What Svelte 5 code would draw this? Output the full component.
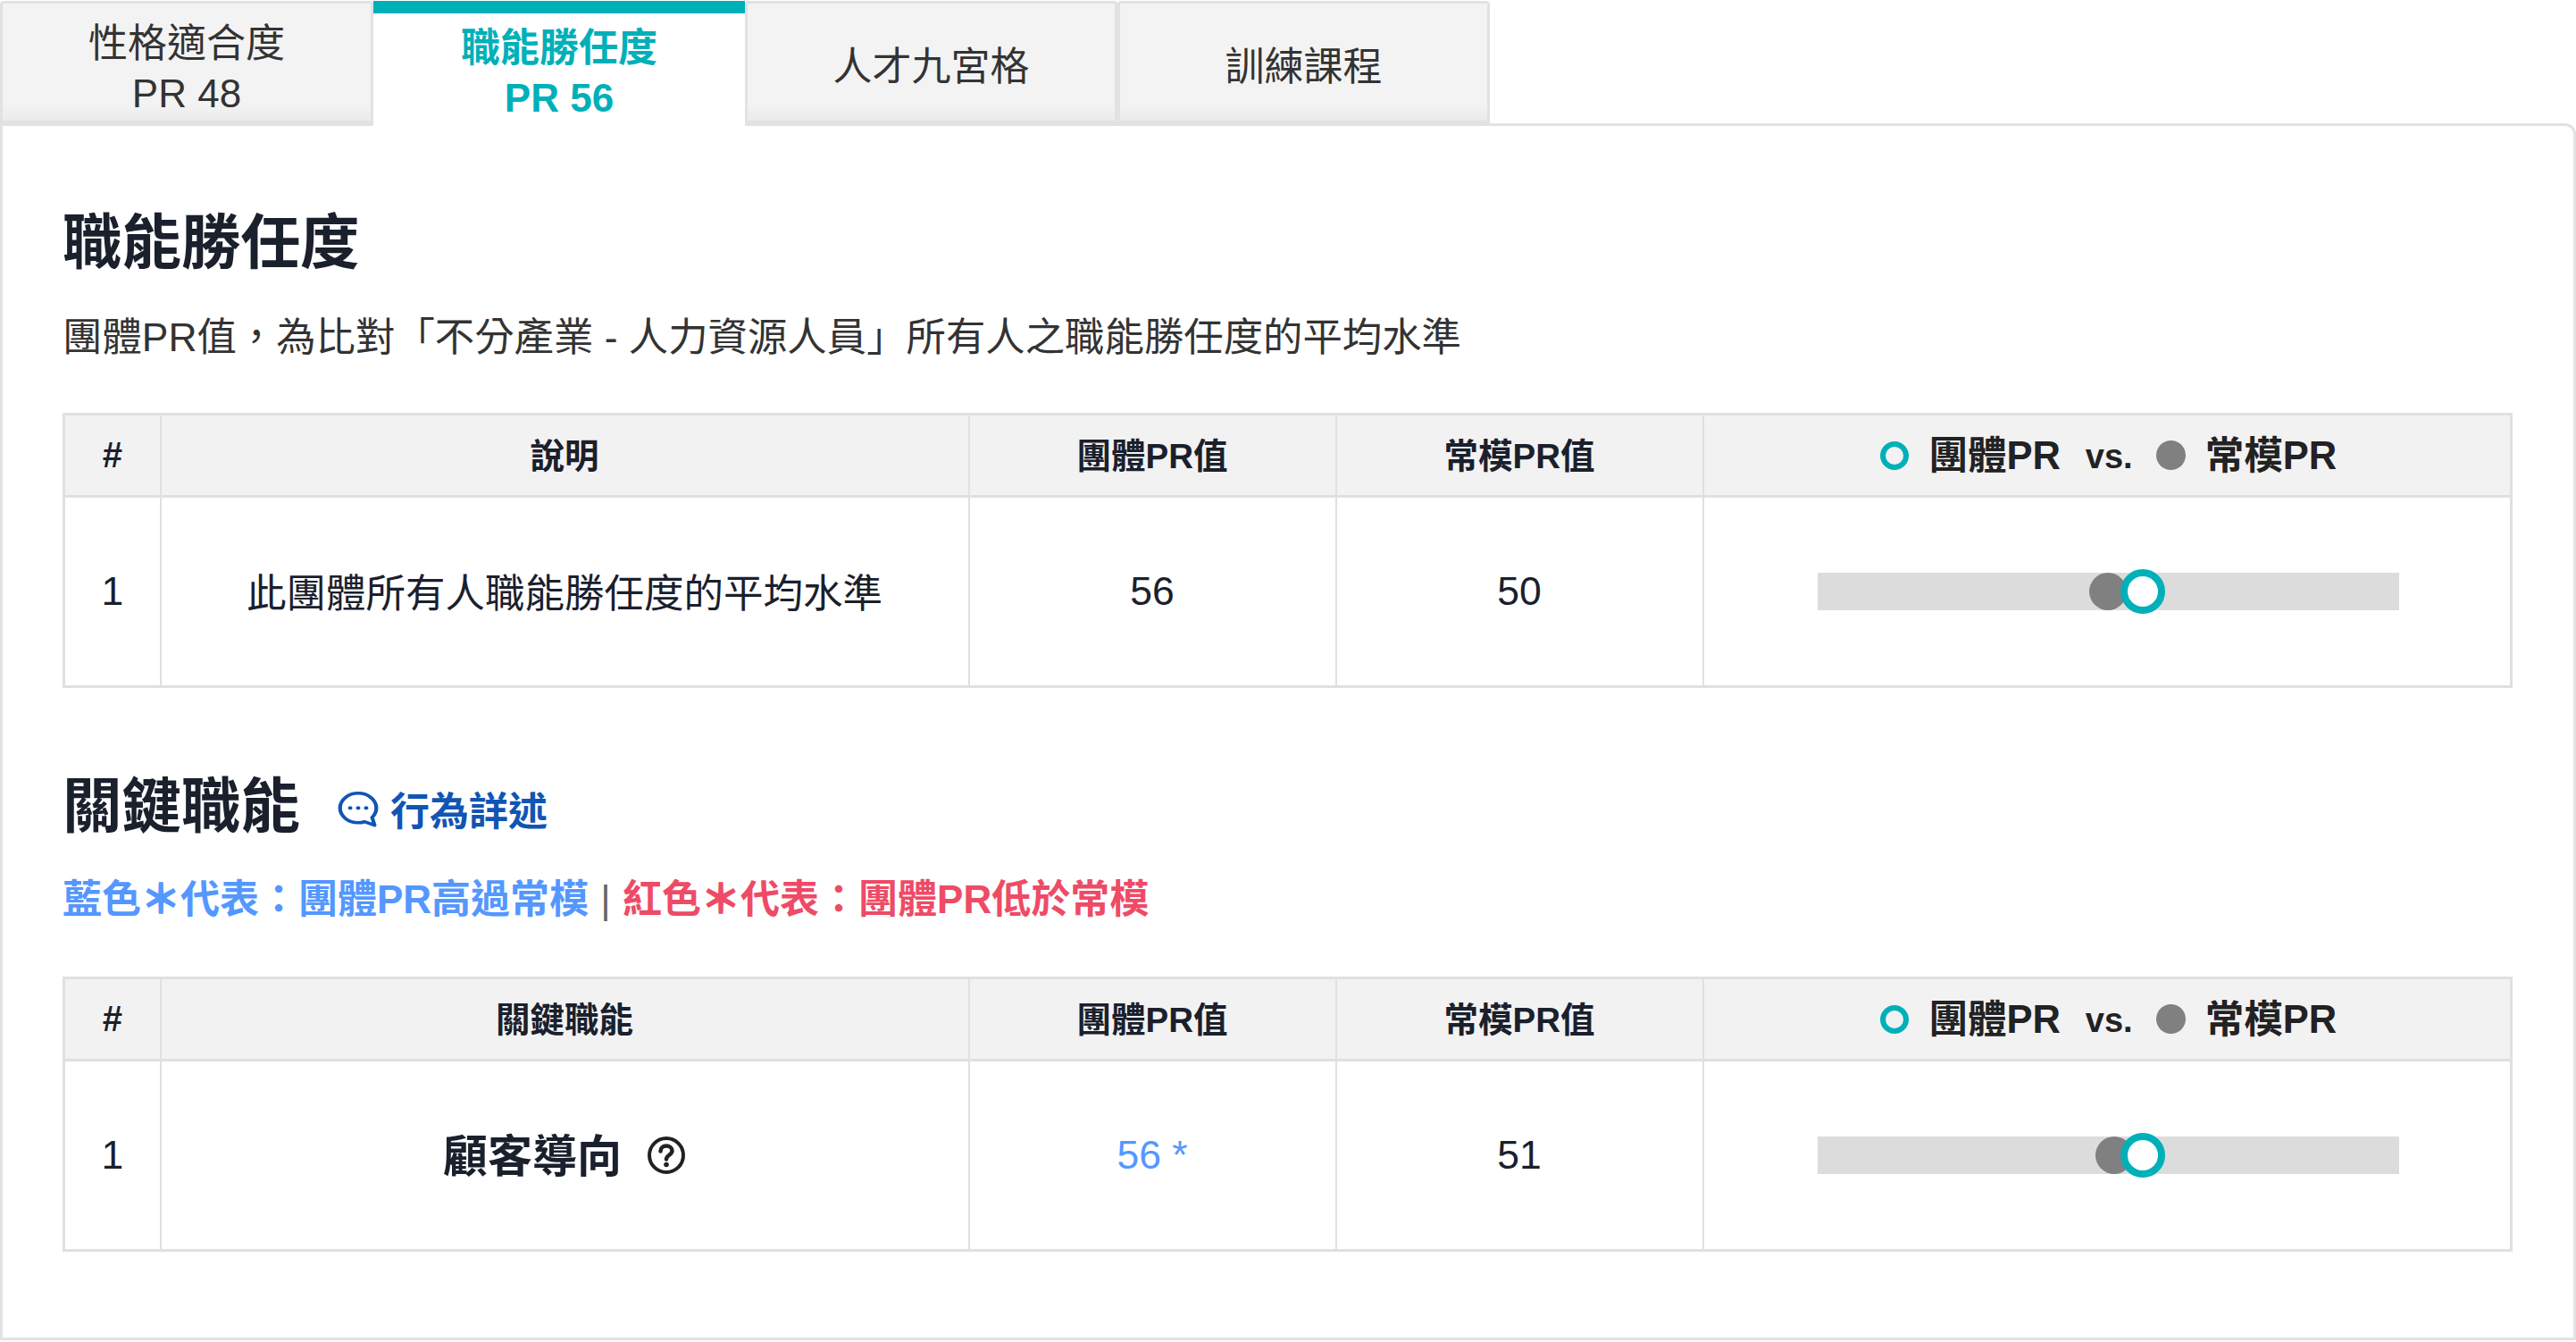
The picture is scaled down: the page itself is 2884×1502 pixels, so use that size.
<script>
  const tabs = [
    { label: "性格適合度", sub: "PR 48" },
    { label: "職能勝任度", sub: "PR 56", active: true },
    { label: "人才九宮格" },
    { label: "訓練課程" }
  ];

  const overall = [{ name: "此團體所有人職能勝任度的平均水準", team: 56, norm: 50 }];
  const competencies = [{ name: "顧客導向", team: 56, norm: 51, star: true }];
</script>

{#snippet legend()}
  <span class="legend">
    <i class="dot-ring"></i><span>團體PR</span>
    <span class="vs">vs.</span>
    <i class="dot-gray"></i><span>常模PR</span>
  </span>
{/snippet}

{#snippet bar(team, norm)}
  <div class="bar">
    <i class="marker-norm" style="left: {norm}%"></i>
    <i class="marker-team" style="left: {team}%"></i>
  </div>
{/snippet}

<div class="page" lang="zh-TW">
  <div class="tabs">
    {#each tabs as tab}
      <div class="tab" class:active={tab.active} class:two-line={tab.sub}>
        <span>{tab.label}</span>
        {#if tab.sub}<span>{tab.sub}</span>{/if}
      </div>
    {/each}
  </div>

  <div class="card">
    <h2>職能勝任度</h2>
    <p class="desc">團體PR值，為比對「不分產業 - 人力資源人員」所有人之職能勝任度的平均水準</p>

    <table>
      <colgroup>
        <col class="c1" /><col class="c2" /><col class="c3" /><col class="c3" /><col />
      </colgroup>
      <thead>
        <tr>
          <th class="num">#</th>
          <th>說明</th>
          <th>團體PR值</th>
          <th>常模PR值</th>
          <th class="vs-head">{@render legend()}</th>
        </tr>
      </thead>
      <tbody>
        {#each overall as row, i}
          <tr>
            <td>{i + 1}</td>
            <td class="text">{row.name}</td>
            <td>{row.team}</td>
            <td>{row.norm}</td>
            <td>{@render bar(row.team, row.norm)}</td>
          </tr>
        {/each}
      </tbody>
    </table>

    <div class="title-row">
      <h2>關鍵職能</h2>
      <span class="link">
        <svg viewBox="0 0 32 32" width="52" height="44" preserveAspectRatio="none" fill="none" stroke="currentColor" stroke-width="2.6">
          <path d="M16 3.500C9 3.500 3.500 9 3.500 15.500S9 27.500 16 27.500c1.500 0 3-.3 4.300-.8l7 2.800-1.700-6.300c1.900-2.100 2.900-4.700 2.900-7.700C28.500 9 23 3.500 16 3.500Z" stroke-linejoin="round" />
          <circle cx="10.500" cy="15.500" r="1.500" fill="currentColor" stroke="none" />
          <circle cx="16" cy="15.500" r="1.500" fill="currentColor" stroke="none" />
          <circle cx="21.500" cy="15.500" r="1.500" fill="currentColor" stroke="none" />
        </svg>
        行為詳述
      </span>
    </div>
    <p class="note">
      <span class="blue">藍色<span class="star">＊</span>代表：團體PR高過常模</span>
      <span class="sep">|</span>
      <span class="red">紅色<span class="star">＊</span>代表：團體PR低於常模</span>
    </p>

    <table>
      <colgroup>
        <col class="c1" /><col class="c2" /><col class="c3" /><col class="c3" /><col />
      </colgroup>
      <thead>
        <tr>
          <th class="num">#</th>
          <th>關鍵職能</th>
          <th>團體PR值</th>
          <th>常模PR值</th>
          <th class="vs-head">{@render legend()}</th>
        </tr>
      </thead>
      <tbody>
        {#each competencies as row, i}
          <tr>
            <td>{i + 1}</td>
            <td>
              <span class="name">
                <b>{row.name}</b>
                <svg viewBox="0 0 44 44" width="44" height="44" fill="none" stroke="#222" stroke-width="4">
                  <circle cx="22" cy="22" r="19" />
                  <path d="M15.500 17.500c0-3.600 2.900-6 6.500-6s6.500 2.400 6.500 5.600c0 4.600-6.500 4.700-6.500 9.400" stroke-width="4.500" stroke-linecap="round" />
                  <circle cx="22" cy="32.500" r="2.800" fill="#222" stroke="none" />
                </svg>
              </span>
            </td>
            <td class:blue={row.star}>{row.team}{row.star ? " *" : ""}</td>
            <td>{row.norm}</td>
            <td>{@render bar(row.team, row.norm)}</td>
          </tr>
        {/each}
      </tbody>
    </table>
  </div>
</div>

<style>
  :global(body) {
    margin: 0;
    background: #fff;
  }

  .page {
    width: 2884px;
    height: 1502px;
    overflow: hidden;
    font-family: "Liberation Sans", "Noto Sans CJK TC", sans-serif;
    color: #1a202c;
  }

  .tabs {
    display: flex;
    height: 138px;
    padding-top: 1px;
    box-sizing: border-box;
  }

  .tab {
    width: 417px;
    display: flex;
    flex-direction: column;
    align-items: center;
    justify-content: center;
    box-sizing: border-box;
    padding-top: 10px;
    background: linear-gradient(#f3f3f3 85%, #ebebeb);
    border: 3px solid #e2e2e2;
    border-radius: 4px 4px 0 0;
    font-size: 44px;
    line-height: 56px;
    color: #333;
  }

  .tab:first-child {
    width: 418px;
  }

  .tab.two-line {
    padding-top: 14px;
  }

  .tab.active {
    position: relative;
    z-index: 1;
    width: 416px;
    height: 141px;
    padding-top: 6px;
    background: #fff;
    border: 0;
    border-top: 14px solid #00b0b9;
    border-radius: 0;
    color: #00b0b9;
    font-weight: 700;
  }

  .card {
    height: 1362px;
    box-sizing: border-box;
    padding: 86px 68px 0 67px;
    background: #fff;
    border: 3px solid #e2e2e2;
    border-radius: 0 12px 0 0;
  }

  h2 {
    margin: 0;
    font-size: 66.5px;
    line-height: 90px;
    font-weight: 700;
  }

  .desc {
    margin: 31px 0 54px;
    font-size: 44.4px;
    line-height: 60px;
    color: #333;
  }

  table {
    width: 100%;
    table-layout: fixed;
    border-collapse: collapse;
    border: 3px solid #e0e0e0;
  }

  .c1 { width: 108px; }
  .c2 { width: 905px; }
  .c3 { width: 411px; }

  th, td {
    border: 2px solid #e0e0e0;
    padding: 0;
    text-align: center;
    vertical-align: middle;
  }

  thead th {
    height: 83px;
    padding-bottom: 6px;
    background: #f2f2f2;
    border-bottom-width: 3px;
    font-size: 38.5px;
    font-weight: 700;
  }

  thead th.num {
    height: 89px;
    padding-bottom: 0;
    font-size: 40px;
  }

  thead th.vs-head {
    padding-left: 4px;
  }

  tbody td {
    height: 210px;
    font-size: 44.5px;
  }

  tbody td.text {
    height: 206px;
    padding-bottom: 4px;
  }

  .legend {
    display: inline-flex;
    align-items: center;
    gap: 22px;
    font-size: 43.5px;
    color: #222;
  }

  .vs {
    font-size: 38px;
    margin: 10px 4px 0 6px;
  }

  .dot-ring {
    width: 32px;
    height: 32px;
    margin-top: 6px;
    box-sizing: border-box;
    border: 6px solid #00b0b9;
    border-radius: 50%;
  }

  .dot-gray {
    width: 33px;
    height: 33px;
    margin-top: 6px;
    background: #808080;
    border-radius: 50%;
  }

  .bar {
    position: relative;
    width: 651px;
    height: 42px;
    margin-left: calc(50% - 324px);
    background: #dcdcdc;
  }

  .marker-norm, .marker-team {
    position: absolute;
    top: 50%;
    border-radius: 50%;
    transform: translate(-50%, -50%);
  }

  .marker-norm {
    width: 42px;
    height: 42px;
    background: #808080;
  }

  .marker-team {
    width: 50px;
    height: 50px;
    box-sizing: border-box;
    background: #fff;
    border: 8px solid #00b0b9;
  }

  .title-row {
    display: flex;
    align-items: center;
    gap: 39px;
    margin-top: 88px;
  }

  .link {
    display: inline-flex;
    align-items: center;
    gap: 10px;
    margin-top: 4px;
    font-size: 44px;
    font-weight: 700;
    color: #1155b4;
  }

  .note {
    margin: 29px 0 56px;
    font-size: 44px;
    line-height: 60px;
    font-weight: 700;
  }

  .blue { color: #5497ff; }
  .red { color: #ee4b66; }
  .sep { margin: 0 1px; font-weight: 400; color: #666; font-size: 44px; }
  .star { -webkit-text-stroke: 1.5px currentColor; }

  .name {
    display: inline-flex;
    align-items: center;
    gap: 28px;
    font-size: 50px;
  }

  .name b {
    margin-bottom: 6px;
  }
</style>
